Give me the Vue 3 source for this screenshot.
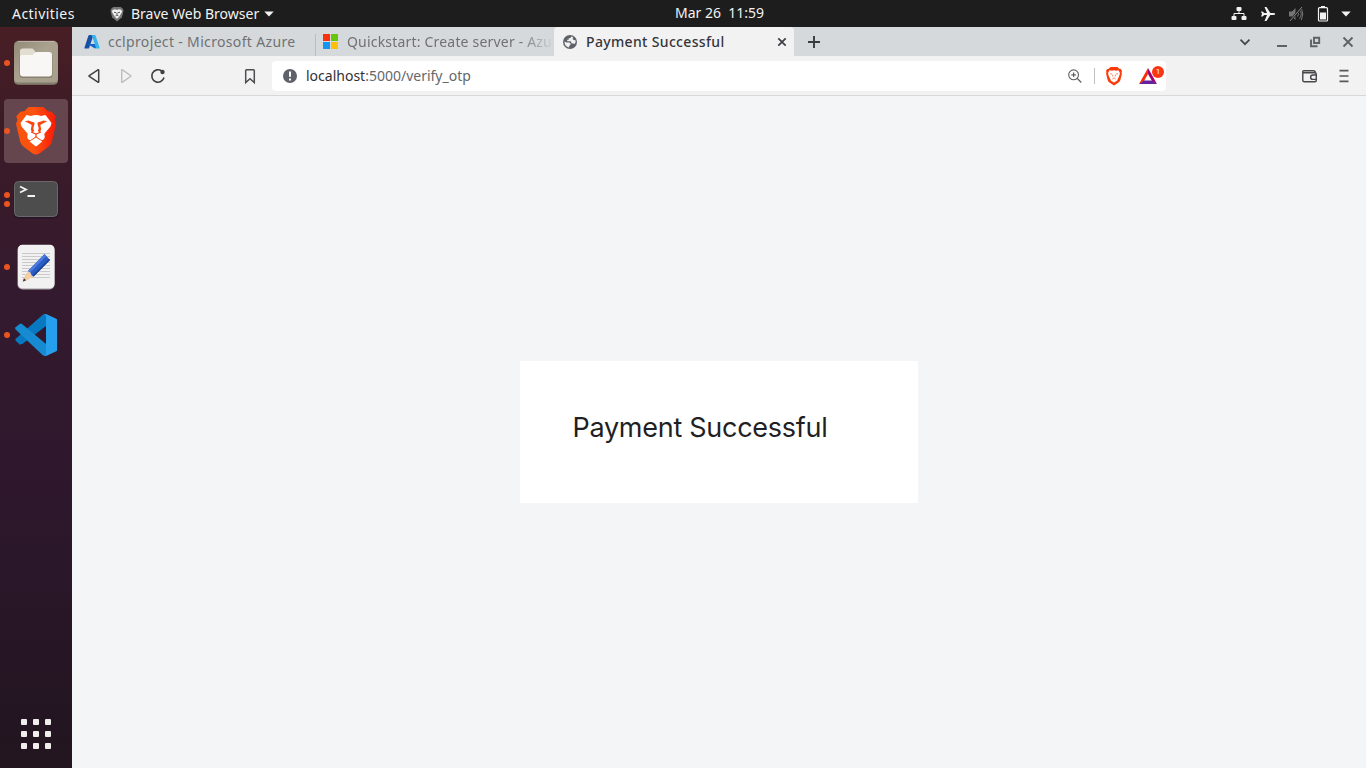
<script setup>
const dockDots = { files: 1, brave: 1, terminal: 2, editor: 1, code: 1 }
</script>

<template>
  <div class="desktop">
    <header class="topbar">
      <span class="activities">Activities</span>
      <svg class="app-icon" width="14" height="16" viewBox="0 0 14 16">
        <path d="M1 3 3.200 1h7.600L13 3l.5 2-1.600 6.300L7 15.600 2.100 11.300.5 5z" fill="#77777a" />
        <path d="M2.500 4 5 3.200 7 4l2-.8 2.500.800.5 2-2 3.300-.8 1.500-2.200 2-2.200-2L4 9.300 2 6z" fill="#f2f2f2" />
        <path d="M4 6.200l2 .5M10 6.200l-2 .5M7 6.500v2.300M5.500 10l1.500-1 1.500 1" stroke="#555" fill="none" />
      </svg>
      <span class="app-name">Brave Web Browser</span>
      <svg class="caret" width="10" height="6" viewBox="0 0 10 6"><path d="M.3.5h9.400L5 5.500z" fill="#f2f2f2" /></svg>
      <span class="clock">Mar 26&nbsp; 11:59</span>
      <div class="tray">
        <svg width="16" height="16" viewBox="0 0 16 16" fill="#f2f2f2">
          <rect x="5.500" y="1" width="5" height="4" rx="1" /><rect x=".5" y="10" width="5" height="4" rx="1" /><rect x="10.500" y="10" width="5" height="4" rx="1" />
          <path d="M8 4v3.500M3 10.500v-3h10v3" fill="none" stroke="#f2f2f2" />
        </svg>
        <svg width="16" height="16" viewBox="0 0 16 16" fill="#f2f2f2">
          <path d="M1 5.500h1.500L4.300 7H7L4.500 1h2L10.300 7H13q2.300.2 2.300 1T13 9h-2.700L6.500 15h-2L7 9H4.300L2.500 10.500H1L2 8z" />
        </svg>
        <svg width="16" height="16" viewBox="0 0 16 16" fill="#757575">
          <path d="M1 5.500h3L7.500 2v12L4 10.500H1z" /><path d="M9.500 5.500q2 2.500 0 5M11.500 3.500q3.500 4.500 0 9M13.300 2q3 6 0 12" fill="none" stroke="#757575" />
          <path d="M14 1 2 15" stroke="#1d1d1d" stroke-width="2" /><path d="M14 1 2 15" stroke="#888" stroke-width="1" />
        </svg>
        <svg width="12" height="16" viewBox="0 0 12 16">
          <path d="M4 0h4v2H4z" fill="#f2f2f2" /><rect x="1.500" y="1.700" width="9" height="13.300" rx="1" fill="none" stroke="#f2f2f2" stroke-width="1.200" /><path d="M3 6.500h6v7H3z" fill="#f2f2f2" />
        </svg>
        <svg width="10" height="6" viewBox="0 0 10 6"><path d="M.3.5h9.400L5 5.500z" fill="#f2f2f2" /></svg>
      </div>
    </header>

    <div class="workspace">
      <nav class="dock">
        <div class="dock-item">
          <span class="dots"><i v-for="n in dockDots.files" :key="n" /></span>
          <svg width="48" height="48" viewBox="0 0 48 48">
            <defs><linearGradient id="folderBack" x1="0" y1="0" x2="1" y2="1"><stop offset="0" stop-color="#918a76" /><stop offset=".45" stop-color="#a9a28e" /><stop offset="1" stop-color="#a69f8b" /></linearGradient></defs>
            <rect x="1.500" y="1.800" width="45" height="45" rx="5" fill="#3c1b20" />
            <rect x="2" y="2" width="44" height="43.500" rx="4.500" fill="url(#folderBack)" />
            <path d="M2 39v2q0 4.500 4.500 4.500h35q4.500 0 4.500-4.500v-2q0 4.500-4.500 4.500h-35Q2 43.500 2 39" fill="#817b6c" />
            <path d="M5.500 2.300h37" stroke="#c9c4b7" stroke-width=".8" />
            <rect x="7.500" y="14" width="33" height="25" rx="3" fill="#888170" />
            <path d="M8 12q0-2.500 2.500-2.500h9q1.500 0 2.300 1.300L23.500 13v6H8z" fill="#e1decf" />
            <path d="M8 18q0-2 2-2h9.500q1.500 0 2.500-1.500t2.500-1.500H37q3 0 3 3v18.500q0 3-3 3H11q-3 0-3-3z" fill="#f8f7f5" />
          </svg>
        </div>
        <div class="dock-item active">
          <span class="dots"><i v-for="n in dockDots.brave" :key="n" /></span>
          <svg width="48" height="50" viewBox="0 0 48 50">
            <defs><linearGradient id="lionFill" x1="0" y1="0" x2="1" y2="0"><stop offset="0" stop-color="#f9530b" /><stop offset=".45" stop-color="#fb5210" /><stop offset="1" stop-color="#fb1806" /></linearGradient></defs>
            <path d="M16.500 1h15l4.500 4.500q3-.7 5.500 2.200l2.300 2.800-1.300 3.200 1.500 4-4.300 18.500q-1 3-4 5l-8 6Q24 50 20.300 47.200l-8-6q-3-2-4-5L4 17.700l1.500-4-1.300-3.200 2.300-2.800Q9 4.800 12 5.500z" fill="url(#lionFill)" />
            <path d="m14.500 9 4.500 1q2.500-1 5-1t5 1l4.500-1L39.500 17l-1 3.500-6 7q-.5 1 .2 2.500.3 2-1.200 3.500l-1.800.8L24 30.200l-5.700 4.100-1.800-.8q-1.500-1.500-1.200-3.500.7-1.500.2-2.500l-6-7-1-3.500z" fill="#fff" />
            <path d="m12.800 15.200 3.700-.7 3.300 1.200 2 .5q1 .5.700 1.700l-1.200 4.300.8 2.800-2 1.700-1.300-3.400.9-4.300-3-1.800zM35.200 15.200l-3.700-.7-3.300 1.200-2 .5q-1 .5-.7 1.700l1.200 4.300-.8 2.800 2 1.700 1.300-3.400-.9-4.300 3-1.800z" fill="#fb470f" />
            <path d="m19 26 5 2 5-2M24 27.500v3.500" fill="none" stroke="#fb420f" stroke-width="1.300" />
            <path d="m17.700 35.500 6.300-4 6.300 4q-3 2.500-5.500 4.500-.8.600-1.600 0-2.500-2-5.500-4.500" fill="#fff" />
          </svg>
        </div>
        <div class="dock-item">
          <span class="dots"><i v-for="n in dockDots.terminal" :key="n" /></span>
          <svg width="48" height="42" viewBox="0 0 48 42">
            <rect x="1.500" y="3" width="45" height="37.500" rx="5" fill="#26142a" /><rect x="2.500" y="3.500" width="43" height="35" rx="4" fill="#4d4d4d" stroke="#6b6868" />
            <path d="m8 8.500 6 3-6 3M15.500 18h7.500" fill="none" stroke="#f3f3f3" stroke-width="1.800" />
          </svg>
        </div>
        <div class="dock-item">
          <span class="dots"><i v-for="n in dockDots.editor" :key="n" /></span>
          <svg width="48" height="48" viewBox="0 0 48 48">
            <rect x="5.500" y="2" width="37" height="44.500" rx="5" fill="#b8b2b5" /><rect x="6" y="1.700" width="36.500" height="43.500" rx="4.500" fill="#f1f1f1" />
            <path d="M10 10.500h28M10 13.500h28M10 16.500h28M10 19.500h28M10 22.500h28M10 25.500h28M10 28.500h28M10 31.500h28M10 34.500h28" stroke="#cacaca" />
            <path d="m16 28 5.700 5.500-9 5-2.200-1.500z" fill="#f4cda5" /><path d="m12 35.300 2 2-3.300 1.500z" fill="#333" />
            <path d="M16 28 32.500 11l5.500 6-16.300 16.500-2-1-1.300-3z" fill="#2b5cc4" /><path d="m16 28 16.500-17 1.800 2-16 16.500z" fill="#4c7dde" /><path d="M20.500 32.500 37 16l1 1-16.300 16.500z" fill="#153d96" />
          </svg>
        </div>
        <div class="dock-item">
          <span class="dots"><i v-for="n in dockDots.code" :key="n" /></span>
          <svg width="48" height="48" viewBox="0 0 48 48">
            <path d="M34 3v12L11.300 32.300 8 33.700l-4.300-4q-.8-1 0-2L31 3.500z" fill="#0879c0" />
            <path d="M34 45V33L10 13q-1.200-.8-2.400 0l-4 3.300q-1 1 0 2.200L31 44.500z" fill="#168bd2" />
            <path d="M31.500 3.500 34 3l10.300 4.800q.8.400.8 1.500v29.400q0 1.100-.8 1.500L34 45l-2.500-.5q2.500.5 2.500-2V5.500q0-2-2.500-2" fill="#269fec" />
          </svg>
        </div>
        <div class="app-grid"><i v-for="n in 9" :key="n" /></div>
      </nav>

      <main class="browser">
        <div class="tabs">
          <div class="tab first">
            <svg width="16" height="16" viewBox="0 0 16 16">
              <path d="M5.500 1h4L5.200 13.700q-.3.900-1.200.9H1.300q-1.200 0-.8-1.200L4.300 2q.3-1 1.200-1" fill="#174fa7" /><path d="M4.500 10h7l1 3.500-1.500 1.100-6.700-4q-.5-.6.200-.6" fill="#1266c8" /><path d="M7 1h3.500q.9 0 1.200.9l3.800 11.500q.4 1.200-.8 1.200H11q1.200-.3.800-1.300L8 2q-.3-.8-1-1" fill="#36b4ee" />
            </svg>
            <span class="title">cclproject - Microsoft Azure</span>
          </div>
          <div class="tab second">
            <svg width="15" height="15" viewBox="0 0 15 15"><path d="M0 0h7v7H0z" fill="#f8320c" /><path d="M8 0h7v7H8z" fill="#66c70a" /><path d="M0 8h7v7H0z" fill="#1597ef" /><path d="M8 8h7v7H8z" fill="#fdbf08" /></svg>
            <span class="title">Quickstart: Create server - Azu</span>
          </div>
          <div class="tab current">
            <svg width="16" height="16" viewBox="0 0 16 16">
              <circle cx="8" cy="8" r="7" fill="#5f6368" />
              <path d="M9.300 2.600Q9 4.200 7.500 4.300H6.700v1.400H5.200v1.600h3.500l1 2.200h1.500l1.700.3q1.200-1.800.6-3.600l-1.800-.2-1.200-1.300.8-1.500M2.500 7.500q-.1 5 4.700 6v-1.700l1.300-.8v-1.400l-1-1.100H4.500z" fill="#f2f2f2" />
            </svg>
            <span class="title">Payment Successful</span>
            <svg class="tab-close" width="10" height="10" viewBox="0 0 10 10"><path d="m1.300 1.300 7.400 7.400M8.700 1.300 1.300 8.700" stroke="#3c3f43" stroke-width="1.700" /></svg>
          </div>
          <svg class="new-tab" width="14" height="14" viewBox="0 0 14 14"><path d="M7 1v12M1 7h12" stroke="#393c40" stroke-width="1.900" /></svg>
          <div class="window-controls">
            <svg class="tab-search" width="12" height="12" viewBox="0 0 12 12"><path d="m1.500 3.700 4.500 4.500 4.500-4.500" fill="none" stroke="#43464a" stroke-width="1.700" /></svg>
            <svg width="12" height="12" viewBox="0 0 12 12"><path d="M1 10h10" stroke="#5e6267" stroke-width="2" /></svg>
            <svg width="12" height="12" viewBox="0 0 12 12"><path d="M5 1.800h5.200V7H5zM2 3.500v6.700h6.500" fill="none" stroke="#5e6267" stroke-width="1.900" /></svg>
            <svg width="12" height="12" viewBox="0 0 12 12"><path d="m1.500 1.500 9 9M10.500 1.500l-9 9" stroke="#5e6267" stroke-width="1.800" /></svg>
          </div>
        </div>

        <div class="toolbar">
          <svg width="20" height="20" viewBox="0 0 20 20"><path d="M14.700 4.300v11.400q0 .9-.8.400L5.300 10.500q-.7-.5 0-1l8.600-5.600q.8-.5.8.4Z" fill="none" stroke="#3f4043" stroke-width="1.500" /></svg>
          <svg width="20" height="20" viewBox="0 0 20 20"><path d="M5.700 4.300v11.400q0 .9.800.4l8-5.600q.7-.5 0-1l-8-5.600q-.8-.5-.8.400Z" fill="none" stroke="#bdbdbd" stroke-width="1.400" /></svg>
          <svg width="20" height="20" viewBox="0 0 20 20"><path d="M13.700 5A6.200 6.200 0 1 0 16 11.500" fill="none" stroke="#3f4043" stroke-width="1.600" /><circle cx="14.500" cy="6" r="2.200" fill="#3f4043" /></svg>
          <svg class="bookmark" width="20" height="20" viewBox="0 0 20 20"><path d="M5.700 4.500q0-.8.800-.8h7q.8 0 .8.800v12L10 12.700l-4.300 3.800Z" fill="none" stroke="#4c4e51" stroke-width="1.500" /></svg>
          <div class="address">
            <svg width="16" height="16" viewBox="0 0 16 16"><circle cx="8" cy="8" r="7" fill="#5f616b" /><path d="M8 3.500v5.200M8 10.500v2" stroke="#fff" stroke-width="2" /></svg>
            <span class="url">localhost<em>:5000/verify_otp</em></span>
            <div class="address-actions">
              <svg width="16" height="16" viewBox="0 0 16 16"><circle cx="6.600" cy="6.800" r="4.900" fill="none" stroke="#5f6063" stroke-width="1.100" /><path d="m10.300 10.500 4 4M6.600 4.500v4.600M4.300 6.800h4.600" stroke="#5f6063" stroke-width="1.200" /></svg>
              <i class="divider" />
              <svg width="18" height="20" viewBox="0 0 18 20">
                <path d="M5.500 1h7l1.800 1.800 1.500.2 1.200 1.700-.4 1.300.3 1.700-1.600 6.600q-.4 1.400-1.700 2.300L9 19.400l-4.600-2.800q-1.300-.9-1.700-2.300L1.100 7.700 1.400 6 1 4.700 2.200 3l1.500-.2z" fill="#fb3b0a" />
                <path d="m4.500 4.300 2.500.4 2-.5 2 .5 2.500-.4 1.500 3-.8 2.700-1.200 2.500-1 2.200L9 16.500l-3-1.800-1-2.200L3.800 10 3 7.300z" fill="#fff" />
                <path d="m5 7.500 2.300.8M13 7.500l-2.300.8M7.700 9v1.500M10.300 9v1.500M7.300 13 9 12l1.700 1" fill="none" stroke="#ff7a55" stroke-width=".9" />
              </svg>
              <div class="rewards">
                <svg width="20" height="18" viewBox="0 0 20 18"><path d="M10 1 1 17l5-3 4-7z" fill="#fb2c08" /><path d="m10 1 9 16-5-3-4-7z" fill="#a1006d" /><path d="M1 17h18l-5-3.500H6z" fill="#64209d" /></svg>
                <b>1</b>
              </div>
            </div>
          </div>
          <svg class="wallet" width="20" height="20" viewBox="0 0 20 20"><path d="M3.700 4.700h9.600q2 0 2 2H4q-1.200 0-1.200-1t.9-1M2.800 5.700v8.600q0 1.500 1.500 1.500h10.500q1.500 0 1.500-1.500V8.200q0-1.500-1.500-1.500H4M16.300 9h-3.500a2.200 2.200 0 0 0 0 4.400h3.500" fill="none" stroke="#45474b" stroke-width="1.400" /></svg>
          <svg class="menu" width="20" height="20" viewBox="0 0 20 20"><path d="M5.500 4.700h9M5.500 10h9M5.500 15.300h9" stroke="#55575a" stroke-width="1.700" /></svg>
        </div>

        <section class="page">
          <div class="card"><h1>Payment Successful</h1></div>
        </section>
      </main>
    </div>
  </div>
</template>

<style>
body { margin: 0; overflow: hidden; }
</style>

<style scoped>
.desktop { width: 1366px; height: 768px; display: flex; flex-direction: column; overflow: hidden; font-family: "Noto Sans", "Open Sans", sans-serif; font-size: 14px; }
svg { display: block; flex: none; }
span { white-space: nowrap; }
.topbar { height: 27px; background: #1d1d1d; color: #f2f2f2; display: grid; grid-template-columns: 98px auto auto auto 1fr auto; align-items: center; flex: none; }
.activities { padding-left: 12px; letter-spacing: 0.45px; }
.app-icon { margin-left: 12px; }
.app-name { margin-left: 7px; width: 129px; letter-spacing: 0; }
.caret { margin-left: 3.500px; }
.clock { justify-self: start; margin-left: 401.500px; padding-bottom: 2px; }
.tray { display: flex; align-items: center; padding-right: 15px; gap: 12.500px; }
.workspace { display: flex; flex: 1; min-height: 0; }
.dock { width: 72px; box-sizing: border-box; padding-top: 4px; display: flex; flex-direction: column; align-items: center; gap: 4px; background: linear-gradient(#491f25 0, #3b1b27 14%, #341a2e 35%, #2d172c 65%, #231521 94%, #24161f); }
.dock-item { width: 64px; height: 64px; border-radius: 4px; display: flex; align-items: center; justify-content: center; position: relative; flex: none; }
.dock-item.active { background: #65464f; }
.dots { position: absolute; left: 0; top: 0; height: 64px; display: flex; flex-direction: column; justify-content: center; gap: 3px; }
.dots i { width: 6px; height: 6px; border-radius: 50%; background: #e95420; }
.app-grid { margin-top: auto; margin-bottom: 19px; display: grid; grid-template-columns: repeat(3, 6px); gap: 6px; }
.app-grid i { width: 6px; height: 6px; border-radius: 1px; background: #f0eeec; }
.browser { flex: 1; min-width: 0; display: flex; flex-direction: column; }
.tabs { height: 29px; background: #d5d9dc; display: flex; align-items: center; flex: none; }
.tab { height: 29px; box-sizing: border-box; display: flex; align-items: center; color: #707173; }
.first { width: 243px; padding-left: 12px; }
.first .title { margin-left: 8px; letter-spacing: 0.34px; }
.second { width: 239px; padding-left: 8px; background: linear-gradient(#b9bdc0, #b9bdc0) 0 7px / 1px 22px no-repeat; }
.second .title { margin-left: 9px; width: 207px; letter-spacing: 0.19px; mask-image: linear-gradient(90deg, #000 172px, transparent 207px); }
.current { width: 240px; padding-left: 8px; background: #f2f2f2; border-radius: 4px 4px 0 0; color: #35363a; font-weight: 550; }
.current .title { margin-left: 8px; letter-spacing: 0.34px; }
.tab-close { margin-left: auto; margin-right: 7px; }
.new-tab { margin-left: 13px; }
.window-controls { margin-left: auto; margin-right: 12px; display: flex; gap: 21px; }
.tab-search { margin-right: 4.500px; }
.toolbar { height: 40px; box-sizing: border-box; border-bottom: 1px solid #d6d8da; background: #f2f2f2; display: flex; align-items: center; padding-left: 12px; gap: 12px; flex: none; }
.bookmark { margin-left: 60px; }
.address { width: 894px; height: 30px; box-sizing: border-box; background: #fff; border-radius: 4px; display: flex; align-items: center; padding: 0 8px 0 10px; }
.url { margin-left: 8px; color: #303135; }
.url em { font-style: normal; color: #65676b; }
.address-actions { margin-left: auto; display: flex; align-items: center; }
.divider { width: 1px; height: 16px; background: #bfc0c2; margin: 0 10px 0 11px; }
.rewards { position: relative; margin-left: 15px; }
.rewards b { position: absolute; left: 14px; top: -1px; width: 12px; height: 12px; border-radius: 50%; background: #fb3515; color: #fff; font: 8px/12px Roboto, sans-serif; text-align: center; }
.wallet { margin-left: 122px; }
.menu { margin-left: 2px; }
.page { flex: 1; background: #f3f5f7; display: flex; flex-direction: column; align-items: center; justify-content: center; }
.card { width: 398px; height: 142px; box-sizing: border-box; padding: 50px 52.500px; background: #fff; }
h1 { margin: 0; font: 400 27px/34px Inter, "Open Sans", sans-serif; letter-spacing: -0.27px; color: #1f1f24; white-space: nowrap; }
</style>
